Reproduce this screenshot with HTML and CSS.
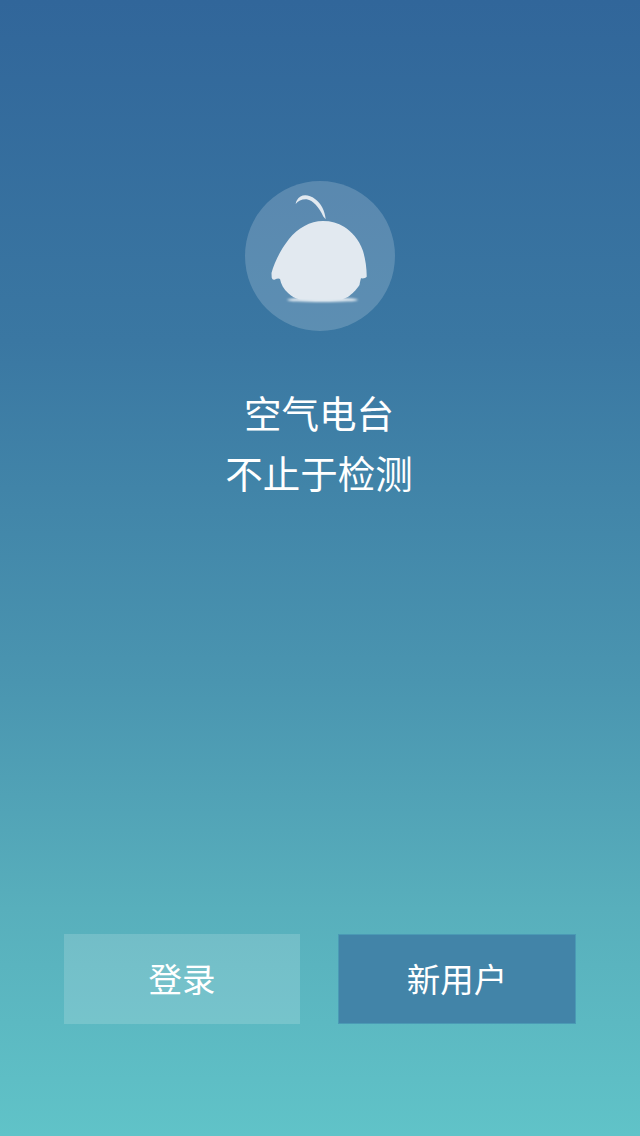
FILE: index.html
```html
<!DOCTYPE html>
<html lang="zh">
<head>
    <meta charset="UTF-8">
    <meta name="viewport" content="width=device-width, initial-scale=1.0">
    <title>空气电台</title>
    <link rel="stylesheet" href="styles.css">
</head>
<body>
    <main class="welcome">
        <div class="logo">
            <svg width="150" height="150" viewBox="0 0 150 150">
                <defs>
                    <filter id="soft" x="-20%" y="-200%" width="140%" height="500%">
                        <feGaussianBlur stdDeviation="0.8"/>
                    </filter>
                    <filter id="edge">
                        <feGaussianBlur stdDeviation="0.35"/>
                    </filter>
                </defs>
                <ellipse cx="77.500" cy="118.800" rx="35.500" ry="2.200" fill="#e6edf3" filter="url(#soft)"/>
                <g fill="#e2e9f0" filter="url(#edge)">
                    <path d="M80.700 38.300C80 30 76 22 70 18C65 14 59 13.500 55.500 15.500C52.500 17.500 51 20 50.700 23C53 20 57 18 61.700 18.300C68 19.500 74 26 78.300 35.500Z"/>
                    <path d="M78 40C65 40 53 47 44 58C36 68 29 82 26.500 92L26.700 96.500C27.300 98.700 28.500 99 30 98.500C31.500 97.500 34 97 35 98C36 103 38.500 108 43.300 112.300C47 115.500 50 117.500 55 118.500H96C102 117.500 105 114.500 108.500 111.300C111 109 113 106 114.500 104C115 101 115.500 98.500 116 97.300C118 97.500 120.500 97.500 121.700 95.700C121.800 88 120.500 78 118 70C114 58 106 50 99 45.700C93 42 86 40 78 40Z"/>
                </g>
            </svg>
        </div>
        <h1 class="slogan">空气电台<br>不止于检测</h1>
        <div class="actions">
            <a class="btn btn-login" href="#">登录</a>
            <a class="btn btn-new" href="#">新用户</a>
        </div>
    </main>
</body>
</html>
```

FILE: styles.css
```css
html, body {
    margin: 0;
    height: 100%;
}
body {
    font-family: "Noto Sans CJK SC", "Liberation Sans", sans-serif;
    background: linear-gradient(to bottom, #31669a 0%, #3a77a2 30%, #4a95b0 60%, #58afbc 80%, #60c3c8 100%);
    color: #ffffff;
}
.welcome {
    height: 1136px;
    box-sizing: border-box;
    padding: 181px 64px 112px;
    display: flex;
    flex-direction: column;
    align-items: center;
}
.logo {
    width: 150px;
    height: 150px;
    border-radius: 50%;
    background-color: rgba(255, 255, 255, 0.18);
}
.logo svg {
    display: block;
}
.slogan {
    margin: 51px 0 0;
    padding-right: 2px;
    font-size: 37.5px;
    font-weight: 400;
    line-height: 60px;
    text-align: center;
}
.actions {
    margin-top: auto;
    align-self: stretch;
    display: flex;
    gap: 38px;
}
.btn {
    flex: 1;
    height: 90px;
    box-sizing: border-box;
    padding-bottom: 3px;
    display: flex;
    align-items: center;
    justify-content: center;
    font-size: 33.500px;
    color: #ffffff;
    text-decoration: none;
}
.btn-login {
    background-color: rgba(255, 255, 255, 0.16);
}
.btn-new {
    background-color: #4284a8;
    border: 1px solid #4a9ab5;
}
```
